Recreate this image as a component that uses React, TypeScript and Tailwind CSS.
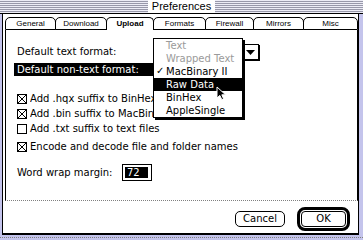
import React from "react";

const tabs: { label: string; w: string; sel?: boolean; first?: boolean }[] = [
  { label: "General", w: "w-[51px]", first: true },
  { label: "Download", w: "w-[52px]" },
  { label: "Upload", w: "w-[48px]", sel: true },
  { label: "Formats", w: "w-[53px]" },
  { label: "Firewall", w: "w-[49px]" },
  { label: "Mirrors", w: "w-[51px]" },
  { label: "Misc", w: "w-[55px]" },
];

function Check({ checked }: { checked: boolean }) {
  return (
    <svg width="10" height="10" viewBox="0 0 10 10" className="shrink-0 block">
      <rect x="0.5" y="0.5" width="9" height="9" fill="white" stroke="black" />
      {checked && (
        <path d="M0.5 0.5 L9.5 9.5 M9.5 0.5 L0.5 9.5" stroke="black" strokeWidth="1" />
      )}
    </svg>
  );
}

function CheckRow({
  checked,
  label,
  cls,
  clip,
}: {
  checked: boolean;
  label: string;
  cls?: string;
  clip?: boolean;
}) {
  return (
    <div className={"flex items-center h-[15px] gap-[3px] " + (cls || "")}>
      <Check checked={checked} />
      <span
        className={
          "leading-none whitespace-nowrap " +
          (clip ? "w-[123px] overflow-hidden h-[12px] flex items-center" : "")
        }
      >
        {label}
      </span>
    </div>
  );
}

const menuItems: { label: string; gray?: boolean; check?: boolean; hi?: boolean }[] = [
  { label: "Text", gray: true },
  { label: "Wrapped Text", gray: true },
  { label: "MacBinary II", check: true },
  { label: "Raw Data", hi: true },
  { label: "BinHex" },
  { label: "AppleSingle" },
];

export default function App() {
  return (
    <div className="relative w-[363px] h-[240px] bg-[#c4c4ec] flex flex-col overflow-hidden font-['DejaVu_Sans',sans-serif] text-[10px] text-black">
      {/* title bar */}
      <div className="h-[14px] border-b border-black flex items-center justify-center bg-[repeating-linear-gradient(to_bottom,#ececf6_0px,#ececf6_1px,#9898aa_1px,#9898aa_2px)]">
        <span className="bg-white px-[4px] h-[13px] flex items-center font-['Liberation_Sans',sans-serif] text-[11px] leading-none">
          Preferences
        </span>
      </div>

      {/* body */}
      <div className="ml-[2px] mr-[4px] h-[221px] bg-white border-l border-r border-b-2 border-black flex flex-col pt-[3px]">
        {/* tabs */}
        <div className="ml-[2px] flex h-[13px] font-['Liberation_Sans',sans-serif] text-[8px]">
          {tabs.map((t) => (
            <div
              key={t.label}
              className={
                t.w +
                " h-[13px] border-t border-l border-r border-black rounded-t-[5px] flex items-center justify-center leading-none " +
                (t.first ? "" : "-ml-px ") +
                (t.sel ? "font-bold bg-white relative z-10" : "border-b")
              }
            >
              {t.label}
            </div>
          ))}
        </div>

        {/* panel */}
        <div className="ml-[2px] w-[353px] h-[171px] border-l border-r border-b border-black border-b-[#808080] [border-bottom-style:dotted] flex flex-col pl-[11px] pt-[14px]">
          <div className="flex items-center h-[16px]">
            <span className="w-[137px] leading-none">Default text format:</span>
            <div className="w-[105px] h-[16px] border border-black shadow-[1px_1px_0_#000] flex items-center justify-end pr-[3px]">
              <svg width="9" height="5" viewBox="0 0 9 5" className="block">
                <path d="M0 0 H9 L4.5 5 Z" fill="black" />
              </svg>
            </div>
          </div>

          <div className="mt-[3px] -ml-[3px] w-[139px] h-[13px] bg-black text-white pl-[3px] flex items-center leading-none">
            Default non-text format:
          </div>

          <CheckRow checked label="Add .hqx suffix to BinHex files" cls="mt-[15px]" clip />
          <CheckRow checked label="Add .bin suffix to MacBinary files" clip />
          <CheckRow checked={false} label="Add .txt suffix to text files" />
          <CheckRow checked label="Encode and decode file and folder names" cls="mt-[3px]" />

          <div className="mt-[10px] flex items-center h-[17px]">
            <span className="w-[105px] leading-none">Word wrap margin:</span>
            <div className="w-[30px] h-[17px] border border-black p-[2px]">
              <div className="w-[23px] h-full bg-black text-white flex items-center pl-[2px] leading-none">72</div>
            </div>
          </div>
        </div>

        {/* buttons */}
        <div className="mt-[6px] flex items-center justify-end pr-[8px] gap-[12px]">
          <div className="w-[50px] h-[16px] border border-black rounded-[5px] flex items-center justify-center leading-none">
            Cancel
          </div>
          <div className="w-[53px] h-[24px] border-[3px] border-black rounded-[8px] p-[1px]">
            <div className="w-full h-full border border-black rounded-[4px] flex items-center justify-center leading-none">
              OK
            </div>
          </div>
        </div>
      </div>

      {/* bottom dotted edge */}
      <div className="mt-[2px] border-t border-dotted border-[#808080]" />

      {/* popup menu */}
      <div className="absolute left-[153px] top-[38px] w-[90px] h-[80px] bg-white border border-black shadow-[2px_2px_0_#000] flex flex-col">
        {menuItems.map((m) => (
          <div
            key={m.label}
            className={
              "relative h-[13px] pl-[12px] flex items-center leading-none " +
              (m.hi ? "bg-black text-white " : "") +
              (m.gray ? "text-[#9a9a9a]" : "")
            }
          >
            {m.check && <span className="absolute left-[2px] top-[1px] text-[10px] leading-none">✓</span>}
            {m.label}
          </div>
        ))}
      </div>

      {/* cursor */}
      <svg width="12" height="16" viewBox="0 0 12 16" className="absolute left-[216px] top-[86px]">
        <path d="M1 1 L1 12 L3.8 9.4 L5.8 13.6 L7.6 12.8 L5.8 8.8 L9.6 8.8 Z" fill="black" stroke="white" strokeWidth="1" strokeLinejoin="miter" />
      </svg>
    </div>
  );
}
